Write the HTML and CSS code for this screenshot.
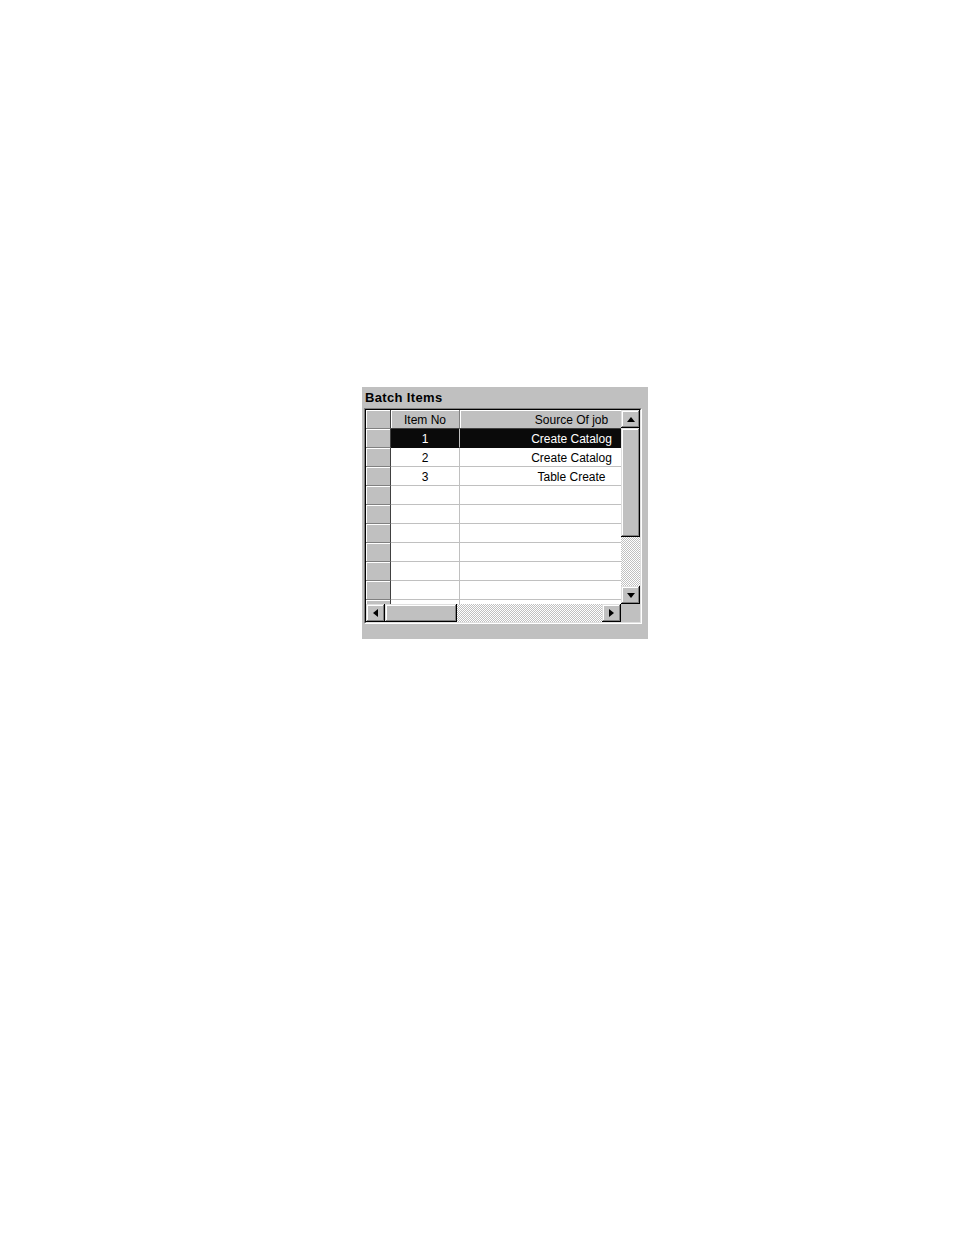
FILE: index.html
```html
<!DOCTYPE html>
<html>
<head>
<meta charset="utf-8">
<link rel="stylesheet" href="styles.css">
</head>
<body>
<div class="page">
  <div class="panel">
    <div class="title">Batch Items</div>
    <div class="frame">
      <div class="frame-inner">
        <div class="table">
          <div class="row">
            <div class="cell rh"></div>
            <div class="cell hd c1">Item No</div>
            <div class="cell hd c2">Source Of job</div>
          </div>
          <div class="row sel">
            <div class="cell rh"></div>
            <div class="cell c1">1</div>
            <div class="cell c2">Create Catalog</div>
          </div>
          <div class="row">
            <div class="cell rh"></div>
            <div class="cell c1">2</div>
            <div class="cell c2">Create Catalog</div>
          </div>
          <div class="row">
            <div class="cell rh"></div>
            <div class="cell c1">3</div>
            <div class="cell c2">Table Create</div>
          </div>
          <div class="row"><div class="cell rh"></div><div class="cell c1"></div><div class="cell c2"></div></div>
          <div class="row"><div class="cell rh"></div><div class="cell c1"></div><div class="cell c2"></div></div>
          <div class="row"><div class="cell rh"></div><div class="cell c1"></div><div class="cell c2"></div></div>
          <div class="row"><div class="cell rh"></div><div class="cell c1"></div><div class="cell c2"></div></div>
          <div class="row"><div class="cell rh"></div><div class="cell c1"></div><div class="cell c2"></div></div>
          <div class="row"><div class="cell rh"></div><div class="cell c1"></div><div class="cell c2"></div></div>
          <div class="row"><div class="cell rh"></div><div class="cell c1"></div><div class="cell c2"></div></div>
        </div>
        <div class="vscroll">
          <div class="btn"><svg width="8" height="5" viewBox="0 0 8 5"><polygon points="4,0 8,5 0,5" fill="#000"/></svg></div>
          <div class="vthumb btn"></div>
          <div class="track"></div>
          <div class="btn"><svg width="8" height="5" viewBox="0 0 8 5"><polygon points="0,0 8,0 4,5" fill="#000"/></svg></div>
        </div>
        <div class="hscroll">
          <div class="btn"><svg width="5" height="8" viewBox="0 0 5 8"><polygon points="5,0 5,8 0,4" fill="#000"/></svg></div>
          <div class="hthumb btn"></div>
          <div class="track"></div>
          <div class="btn"><svg width="5" height="8" viewBox="0 0 5 8"><polygon points="0,0 5,4 0,8" fill="#000"/></svg></div>
        </div>
        <div class="corner"></div>
      </div>
    </div>
  </div>
</div>
</body>
</html>
```

FILE: styles.css
```css
html, body {
  margin: 0;
  padding: 0;
  background: #fff;
}

.page {
  padding: 387px 0 0 362px;
}

.panel {
  width: 286px;
  height: 252px;
  box-sizing: border-box;
  background: #c0c0c0;
  font-family: "Liberation Sans", Arial, sans-serif;
  color: #000;
}

.title {
  height: 21px;
  box-sizing: border-box;
  padding: 1px 0 0 3px;
  line-height: 20px;
  font-size: 13px;
  font-weight: bold;
  letter-spacing: 0.35px;
}

.frame {
  margin-left: 2px;
  width: 278px;
  box-sizing: border-box;
  border: 1px solid;
  border-color: #808080 #ffffff #ffffff #808080;
}

.frame-inner {
  border: 1px solid;
  border-color: #000000 #dfdfdf #dfdfdf #000000;
  display: grid;
  grid-template-columns: 255px 19px;
  grid-template-rows: 194px 18px;
}

.table {
  overflow: hidden;
  background: #fff;
}

.row {
  display: flex;
  height: 19px;
}

.cell {
  flex: none;
  box-sizing: border-box;
  height: 19px;
  line-height: 20px;
  font-size: 12px;
  text-align: center;
  white-space: nowrap;
  border-right: 1px solid #c0c0c0;
  border-bottom: 1px solid #c0c0c0;
}

.rh {
  width: 25px;
  background: #c0c0c0;
  border-right: 1px solid #404040;
  border-bottom: 1px solid #808080;
  box-shadow: inset 1px 1px #ffffff;
}

.c1 {
  width: 69px;
}

.c2 {
  width: 224px;
}

.hd {
  background: #c0c0c0;
  border-right: 1px solid #808080;
  border-bottom: 1px solid #404040;
  box-shadow: inset 1px 1px #ffffff;
}

.sel .c1,
.sel .c2 {
  background: #0a0a0a;
  color: #fff;
  border-bottom-color: #0a0a0a;
}

.btn {
  flex: none;
  background: #c0c0c0;
  box-shadow: inset -1px -1px #000000, inset 1px 1px #dfdfdf, inset -2px -2px #808080, inset 2px 2px #ffffff;
  display: flex;
  align-items: center;
  justify-content: center;
}

.vscroll {
  display: flex;
  flex-direction: column;
}

.vscroll .btn {
  height: 18px;
}

.vscroll .vthumb {
  height: 109px;
}

.hscroll {
  display: flex;
}

.hscroll .btn {
  width: 19px;
}

.hscroll .hthumb {
  width: 72px;
}

.track {
  flex: 1;
  background-color: #c0c0c0;
  background-image: repeating-conic-gradient(#ffffff 0 25%, #c0c0c0 0 50%);
  background-size: 2px 2px;
}

.corner {
  background: #c0c0c0;
}
```
